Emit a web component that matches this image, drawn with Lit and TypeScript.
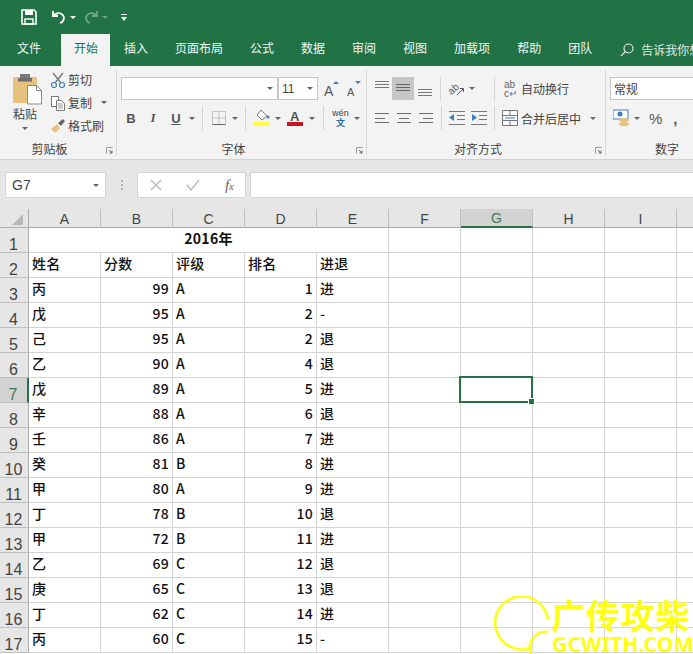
import { LitElement, html, css } from "lit";
import { customElement } from "lit/decorators.js";

const rows: string[][] = [
  ["丙","99","A","1","进"],["戊","95","A","2","-"],["己","95","A","2","退"],["乙","90","A","4","退"],
  ["戊","89","A","5","进"],["辛","88","A","6","退"],["壬","86","A","7","进"],["癸","81","B","8","进"],
  ["甲","80","A","9","进"],["丁","78","B","10","退"],["甲","72","B","11","进"],["乙","69","C","12","退"],
  ["庚","65","C","13","退"],["丁","62","C","14","进"],["丙","60","C","15","-"],
];
const colNames = ["A","B","C","D","E","F","G","H","I","J"];
const caret = html`<span class="caret"></span>`;

@customElement("app-root")
export class AppRoot extends LitElement {
  static styles = css`
    :host { display: block; width: 693px; height: 654px; overflow: hidden; position: relative; background: #fff;
      font-family: "Noto Sans CJK SC", "Noto Sans", sans-serif; font-size: 12px; color: #444; }
    .qat { height: 34px; background: #217346; display: flex; align-items: center; padding-left: 21px; }
    .qat svg { display: block; }
    .tabs { height: 32px; background: #217346; display: flex; color: #f2f7f4; line-height: 28px; padding-left: 17px; }
    .tab { margin-right: 27px; white-space: nowrap; }
    .tab.active { background: #f3f3f3; color: #217346; padding: 0 13px; margin-left: -7px; margin-right: 14px; width: 49px; box-sizing: border-box; text-align: center; }
    .search { display: flex; align-items: center; gap: 7px; margin-left: 1px; white-space: nowrap; opacity: .9; }
    .ribbon { height: 94px; background: #f3f3f3; display: flex; border-bottom: 1px solid #d2d2d2; box-sizing: border-box; overflow: hidden; }
    .group { position: relative; flex: none; height: 86px; box-sizing: border-box; border-right: 1px solid #d9d9d9; margin-top: 4px; display: flex; flex-direction: column; }
    .body { height: 70px; display: flex; }
    .title { text-align: center; line-height: 18px; height: 16px; color: #444; white-space: nowrap; }
    .launch { position: absolute; right: 3px; bottom: 2px; width: 7px; height: 7px; }
    .caret { display: inline-block; width: 0; height: 0; border: 3px solid transparent; border-top: 3.5px solid #666; border-bottom: 0; flex: none; }
    .sep { width: 1px; height: 24px; background: #d4d4d4; flex: none; }
    .paste { width: 50px; display: flex; flex-direction: column; align-items: center; box-sizing: border-box; }
    .paste svg { margin: 3px 0 0 4px; display: block; }
    .paste span.t { line-height: 16px; margin-top: 1px; }
    .paste .caret { margin-top: 5px; }
    .clip { display: flex; flex-direction: column; padding-top: 0; margin-top: -2px; }
    .clip .it { height: 23px; display: flex; align-items: center; white-space: nowrap; }
    .clip svg { width: 16px; height: 16px; margin-right: 2px; flex: none; }
    .col { display: flex; flex-direction: column; }
    .r1 { height: 23px; margin-top: 7px; display: flex; align-items: center; }
    .r2 { margin-top: 6px; height: 24px; display: flex; align-items: center; }
    .field { height: 23px; box-sizing: border-box; background: #fff; border: 1px solid #c6c6c6; display: flex; align-items: center; justify-content: space-between; padding: 0 4px 0 3px; flex: none; }
    .ico { display: flex; align-items: center; justify-content: center; flex: none; }
    .sel { background: #c6c6c6; }
    .gap { height: 49px; background: #e6e6e6; box-sizing: border-box; display: flex; padding: 12px 0 0 5px; }
    .fbox { height: 26px; background: #fff; border: 1px solid #d4d4d4; box-sizing: border-box; display: flex; align-items: center; }
    .name { width: 101px; justify-content: space-between; padding: 0 6px; font-family: "Liberation Sans", sans-serif; font-size: 14px; color: #444; }
    .dots { width: 31px; display: flex; flex-direction: column; gap: 2px; align-items: center; justify-content: center; height: 26px; }
    .dots i { width: 2px; height: 2px; background: #b0b0b0; display: block; }
    .btns { width: 109px; justify-content: space-between; padding: 0 11px 0 12px; margin-right: 4px; color: #bbb; }
    .fx { font-family: "Liberation Serif", serif; font-style: italic; color: #666; font-size: 15px; }
    .input { flex: 1; border-right: 0; }
    .sheet { display: grid; grid-template-columns: 29px repeat(10, 72px); grid-template-rows: 19px repeat(17, 25px); background: #fff; }
    .ch, .rh { background: #e6e6e6; font-family: "Liberation Sans", sans-serif; color: #444; font-size: 14px; display: flex; box-sizing: border-box; }
    .ch { align-items: center; justify-content: center; border-right: 1px solid #c0c0c0; border-bottom: 1px solid #ababab; padding-top: 1px; }
    .ch.on { background: #d2d2d2; color: #3f7a5c; border-bottom: 2px solid #217346; }
    .rh { align-items: flex-end; justify-content: center; border-right: 1px solid #ababab; border-bottom: 1px solid #c0c0c0; padding-right: 1px; font-size: 16px; line-height: 14px; }
    .rh.on { background: #d2d2d2; color: #3f7a5c; border-right: 2px solid #217346; }
    .corner { background: #e6e6e6; border-right: 1px solid #ababab; border-bottom: 1px solid #ababab; box-sizing: border-box; display: flex; align-items: flex-end; justify-content: flex-end; padding: 0 5px 2px 0; }
    .corner i { display: block; width: 0; height: 0; border-left: 11px solid transparent; border-bottom: 11px solid #b9b9b9; }
    .c { border-right: 1px solid #d4d4d4; border-bottom: 1px solid #d4d4d4; box-sizing: border-box; font-weight: 500; font-size: 14px; color: #111; padding: 0 3px; line-height: 20px; white-space: nowrap; font-family: "Noto Sans CJK SC", sans-serif; letter-spacing: .3px; }
    .c.num { text-align: right; }
    .c.head { grid-column: span 5; text-align: center; font-weight: 700; }
    .c.cur { position: relative; }
    .c.cur::after { content: ""; position: absolute; left: -2px; top: -2px; right: -1px; bottom: -1px; border: 2px solid #217346; box-sizing: border-box; }
    .c.cur::before { content: ""; position: absolute; right: -3px; bottom: -3px; width: 5px; height: 5px; background: #217346; border: 1px solid #fff; box-sizing: content-box; z-index: 2; }
    .wm { position: absolute; left: 490px; top: 596px; width: 203px; height: 58px; color: #ffff14; font-family: "Noto Sans CJK SC", sans-serif; font-weight: 700; pointer-events: none; }
    .wm svg { position: absolute; left: 0; top: 0; }
    .wm .a { position: absolute; left: 61px; top: 0; font-size: 34px; line-height: 38px; height: 38px; white-space: nowrap; letter-spacing: .8px; }
    .wm .b { position: absolute; left: 62px; top: 38px; font-size: 21px; line-height: 20px; white-space: nowrap; font-family: "Noto Sans", sans-serif; font-weight: 700; letter-spacing: .2px; }
  `;

  launcher() {
    return html`<svg class="launch" viewBox="0 0 7 7"><path d="M.5 6.5V.5h6" fill="none" stroke="#999"/><path d="M3 3l3 3M6 3.5V6H3.5" fill="none" stroke="#666"/></svg>`;
  }

  ribbon() {
    return html`<div class="ribbon">
      <div class="group" style="width:117px">
        <div class="body">
          <div class="paste">
            <svg width="30" height="32" viewBox="0 0 30 32"><rect x="1" y="4" width="24" height="26" rx="1" fill="#e6c27c"/><rect x="8" y="1" width="10" height="7" fill="#7a7a7a"/><rect x="6" y="5" width="14" height="3.5" fill="#6d6d6d"/><path d="M15.500 12.500h9l5 5v13.500h-14z" fill="#fff" stroke="#8a8a8a"/><path d="M24.500 12.500v5h5" fill="none" stroke="#8a8a8a"/></svg>
            <span class="t">粘贴</span>
            ${caret}
          </div>
          <div class="clip">
            <div class="it"><svg viewBox="0 0 16 16"><path d="M3 1l8 10M13 1L5 11" stroke="#777" stroke-width="1.400" fill="none"/><circle cx="4" cy="13" r="2.500" fill="none" stroke="#3f7fbf" stroke-width="1.200"/><circle cx="12" cy="13" r="2.500" fill="none" stroke="#3f7fbf" stroke-width="1.200"/></svg>剪切</div>
            <div class="it"><svg viewBox="0 0 16 16"><path d="M1.500 1.500h7v10h-7z" fill="#fff" stroke="#777"/><path d="M6.500 5.500h5l3 3v7h-8z" fill="#fff" stroke="#777"/><path d="M8 9h5M8 11h5M8 13h5" stroke="#999"/></svg>复制<span class="caret" style="margin-left:9px"></span></div>
            <div class="it"><svg viewBox="0 0 16 16"><path d="M1 11l6-5 3 4-5 5z" fill="#e6c27c"/><path d="M8 5l5-4 2 2-4 5z" fill="#666"/></svg>格式刷</div>
          </div>
        </div>
        <div class="title" style="padding-right:17px">剪贴板</div>
        ${this.launcher()}
      </div>

      <div class="group" style="width:250px">
        <div class="body col">
          <div class="r1" style="padding-left:4px">
            <div class="field" style="width:157px;justify-content:flex-end">${caret}</div>
            <div class="field" style="width:40px;font-family:'Liberation Sans',sans-serif;margin-right:6px">11${caret}</div>
            <svg width="18" height="18" viewBox="0 0 18 18" style="margin-right:5px"><text x="0" y="16" font-family="Liberation Sans" font-size="14" fill="#555">A</text><path d="M9 4l3-3 3 3z" fill="#4a7ea8"/></svg>
            <svg width="16" height="18" viewBox="0 0 16 18"><text x="0" y="16" font-family="Liberation Sans" font-size="11" fill="#555">A</text><path d="M8 1h6l-3 3z" fill="#4a7ea8"/></svg>
          </div>
          <div class="r2" style="padding-left:7px">
            <span class="ico" style="width:14px;font:700 13px 'Liberation Sans';color:#555">B</span>
            <span class="ico" style="width:14px;margin-left:8px;font:italic 700 13px 'Liberation Serif';color:#555">I</span>
            <span class="ico" style="width:14px;margin-left:9px;font:700 13px 'Liberation Sans';color:#555;text-decoration:underline">U</span>
            <span style="margin-left:6px;display:flex">${caret}</span>
            <span class="sep" style="margin-left:7px"></span>
            <svg style="margin-left:9px" width="14" height="14" viewBox="0 0 14 14"><path d="M.5.500h13v13H.5zM7 .5v13M.5 7h13" fill="none" stroke="#999" stroke-dasharray="1 1"/><path d="M.5 13.500h13" stroke="#666"/></svg>
            <span style="margin-left:6px;display:flex">${caret}</span>
            <span class="sep" style="margin-left:7px"></span>
            <svg style="margin-left:7px" width="17" height="18" viewBox="0 0 17 18"><path d="M8 1l6 6-5 4-5-5z" fill="#fff" stroke="#777"/><circle cx="15" cy="8" r="1.500" fill="#4a7ea8"/><rect x="0" y="13" width="16" height="4" fill="#ffff3c"/></svg>
            <span style="margin-left:5px;display:flex">${caret}</span>
            <svg style="margin-left:6px" width="17" height="18" viewBox="0 0 17 18"><text x="3" y="12" font-family="Liberation Sans" font-size="13" font-weight="700" fill="#555">A</text><rect x="0" y="13" width="16" height="4" fill="#c8141e"/></svg>
            <span style="margin-left:5px;display:flex">${caret}</span>
            <span class="sep" style="margin-left:8px"></span>
            <span style="margin-left:8px;width:17px;display:flex;flex-direction:column;align-items:center;font-size:9px"><span style="font-family:'Liberation Sans';line-height:9px;height:9px">wén</span><span style="color:#2b6ea8;font-weight:700;line-height:9px;height:9px">文</span></span>
            <span style="margin-left:5px;display:flex">${caret}</span>
          </div>
        </div>
        <div class="title" style="padding-right:16px">字体</div>
        ${this.launcher()}
      </div>

      <div class="group" style="width:239px">
        <div class="body col">
          <div class="r1" style="padding-left:7px">
            <span class="ico" style="width:16px;margin-right:2px"><svg width="16" height="18" viewBox="0 0 16 18"><path d="M1 1.500h14M1 4.500h14M1 7.500h14" stroke="#777"/></svg></span>
            <span class="ico sel" style="width:22px;height:23px"><svg width="16" height="18" viewBox="0 0 16 18"><path d="M1 4.500h14M1 7.500h14M1 10.500h14" stroke="#666"/></svg></span>
            <span class="ico" style="width:16px;margin-left:3px"><svg width="16" height="18" viewBox="0 0 16 18"><path d="M1 9.500h14M1 12.500h14M1 15.500h14" stroke="#777"/></svg></span>
            <span class="sep" style="margin-left:7px"></span>
            <svg style="margin-left:7px" width="16" height="16" viewBox="0 0 16 16"><text x="0" y="11" font-family="Liberation Sans" font-size="10" fill="#555" transform="rotate(-40 6 8)">ab</text><path d="M9 14l6-6M12 7.500h3.500V11" fill="none" stroke="#555"/></svg>
            <span style="margin-left:5px;display:flex">${caret}</span>
            <span class="sep" style="margin-left:19px"></span>
            <span style="margin-left:9px;width:13px;display:flex;flex-direction:column;font:10px/9px 'Liberation Sans';color:#666"><span style="height:9px">ab</span><span style="height:9px">c<span style="color:#3f7fbf">↵</span></span></span>
            <span style="margin-left:4px;white-space:nowrap">自动换行</span>
          </div>
          <div class="r2" style="padding-left:7px">
            <span class="ico" style="width:16px;margin-right:6px"><svg width="16" height="16" viewBox="0 0 16 16"><path d="M1 3.500h14M1 8.500h10M1 12.500h14" stroke="#6b6b6b"/></svg></span>
            <span class="ico" style="width:16px;margin-right:6px"><svg width="16" height="16" viewBox="0 0 16 16"><path d="M1 3.500h14M3 8.500h10M1 12.500h14" stroke="#6b6b6b"/></svg></span>
            <span class="ico" style="width:16px"><svg width="16" height="16" viewBox="0 0 16 16"><path d="M1 3.500h14M5 8.500h10M1 12.500h14" stroke="#6b6b6b"/></svg></span>
            <span class="sep" style="margin-left:7px"></span>
            <svg style="margin-left:7px" width="16" height="14" viewBox="0 0 16 14"><path d="M0 .5h16M8 4.500h8M8 8.500h8M0 13.500h16" stroke="#777"/><path d="M0 6.500l5-3.500v7z" fill="#3f7fbf"/></svg>
            <svg style="margin-left:6px" width="16" height="14" viewBox="0 0 16 14"><path d="M0 .5h16M8 4.500h8M8 8.500h8M0 13.500h16" stroke="#777"/><path d="M6 6.500L1 3v7z" fill="#3f7fbf"/></svg>
            <span class="sep" style="margin-left:7px"></span>
            <svg style="margin-left:7px" width="16" height="16" viewBox="0 0 16 16"><path d="M.5.500h15v15H.5zM.5 5.500h15M.5 10.500h15M8 .5v5M8 10.500v5" fill="#fbfbfb" stroke="#777"/><path d="M3 8h10" stroke="#3f7fbf"/></svg>
            <span style="margin-left:3px;white-space:nowrap">合并后居中</span>
            <span style="margin-left:9px;display:flex">${caret}</span>
          </div>
        </div>
        <div class="title" style="padding-right:16px">对齐方式</div>
        ${this.launcher()}
      </div>

      <div class="group" style="width:200px;border:0">
        <div class="body col">
          <div class="r1" style="padding-left:4px"><div class="field" style="width:180px">常规</div></div>
          <div class="r2" style="padding-left:7px">
            <svg width="17" height="18" viewBox="0 0 17 18"><rect x="0" y="1" width="15" height="9" fill="#fff" stroke="#3f7fbf"/><circle cx="7" cy="5" r="2.500" fill="#3f7fbf"/><ellipse cx="11" cy="11" rx="5" ry="2" fill="#e6c27c"/><ellipse cx="11" cy="15" rx="5" ry="2" fill="#e6c27c"/></svg>
            <span style="margin-left:4px;display:flex">${caret}</span>
            <span style="margin-left:9px;font:400 15px 'Liberation Sans';color:#555">%</span>
            <span style="margin-left:11px;font:700 15px 'Liberation Sans';color:#555">,</span>
          </div>
        </div>
        <div class="title" style="width:122px">数字</div>
      </div>
    </div>`;
  }

  render() {
    return html`
      <div class="qat">
        <svg width="16" height="16" viewBox="0 0 16 16"><path d="M1 1h12l2 2v12H1z" fill="none" stroke="#fff" stroke-width="1.600"/><rect x="4" y="1" width="8" height="5" fill="#fff"/><rect x="4" y="10" width="8" height="5" fill="none" stroke="#fff" stroke-width="1.400"/></svg>
        <svg style="margin-left:14px" width="16" height="16" viewBox="0 0 16 16"><path d="M2 2v5h5" fill="none" stroke="#fff" stroke-width="1.800"/><path d="M2.500 7A5.500 5 0 1 1 9 14" fill="none" stroke="#fff" stroke-width="1.800"/></svg>
        <span class="caret" style="margin-left:3px;border-top-color:#fff"></span>
        <svg style="margin-left:7px;opacity:.35" width="16" height="16" viewBox="0 0 16 16"><path d="M14 2v5H9" fill="none" stroke="#fff" stroke-width="1.800"/><path d="M13.500 7A5.500 5 0 1 0 7 14" fill="none" stroke="#fff" stroke-width="1.800"/></svg>
        <span class="caret" style="margin-left:3px;border-top-color:#fff;opacity:.35"></span>
        <svg style="margin-left:12px" width="8" height="9" viewBox="0 0 8 9"><path d="M1 1.500h6" stroke="#fff"/><path d="M1 4h6L4 8z" fill="#fff"/></svg>
      </div>
      <div class="tabs">
        <span class="tab">文件</span><span class="tab active">开始</span><span class="tab">插入</span><span class="tab">页面布局</span><span class="tab">公式</span><span class="tab">数据</span><span class="tab">审阅</span><span class="tab">视图</span><span class="tab">加载项</span><span class="tab">帮助</span><span class="tab">团队</span>
        <span class="search"><svg width="14" height="14" viewBox="0 0 14 14"><circle cx="8.500" cy="5.500" r="4.500" fill="none" stroke="#fff" stroke-width="1.100"/><path d="M5.300 8.700L1 13" stroke="#fff" stroke-width="1.100"/></svg>告诉我你想要做什么</span>
      </div>
      ${this.ribbon()}
      <div class="gap">
        <div class="fbox name">G7<span class="caret"></span></div>
        <div class="dots"><i></i><i></i><i></i></div>
        <div class="fbox btns">
          <svg width="12" height="12" viewBox="0 0 12 12"><path d="M1 1l10 10M11 1L1 11" stroke="#bbb" stroke-width="1.500"/></svg>
          <svg width="14" height="12" viewBox="0 0 14 12"><path d="M1 6l4 5 8-10" fill="none" stroke="#bbb" stroke-width="1.500"/></svg>
          <span class="fx">f<span style="font-size:11px">x</span></span>
        </div>
        <div class="fbox input"></div>
      </div>
      <div class="sheet">
        <div class="corner"><i></i></div>
        ${colNames.map((c) => html`<div class="ch ${c === "G" ? "on" : ""}">${c}</div>`)}
        <div class="rh">1</div>
        <div class="c head">2016年</div>
        ${colNames.slice(5).map(() => html`<div class="c"></div>`)}
        <div class="rh">2</div>
        ${["姓名","分数","评级","排名","进退"].map((t) => html`<div class="c">${t}</div>`)}
        ${colNames.slice(5).map(() => html`<div class="c"></div>`)}
        ${rows.map((r, i) => html`
          <div class="rh ${i + 3 === 7 ? "on" : ""}">${i + 3}</div>
          <div class="c">${r[0]}</div><div class="c num">${r[1]}</div><div class="c">${r[2]}</div><div class="c num">${r[3]}</div><div class="c">${r[4]}</div>
          ${colNames.slice(5).map((c) => html`<div class="c ${c === "G" && i + 3 === 7 ? "cur" : ""}"></div>`)}
        `)}
      </div>
      <div class="wm">
        <svg width="70" height="58" viewBox="0 0 70 58"><path d="M58 24A26.500 26.500 0 1 0 40 52" fill="none" stroke="#ffff14" stroke-width="2.500"/><path d="M58 36A16 16 0 0 0 41 58" fill="none" stroke="#ffff14" stroke-width="2.500"/></svg>
        <span class="a">广传攻柴</span>
        <span class="b">GCWITH.COM</span>
      </div>
    `;
  }
}
